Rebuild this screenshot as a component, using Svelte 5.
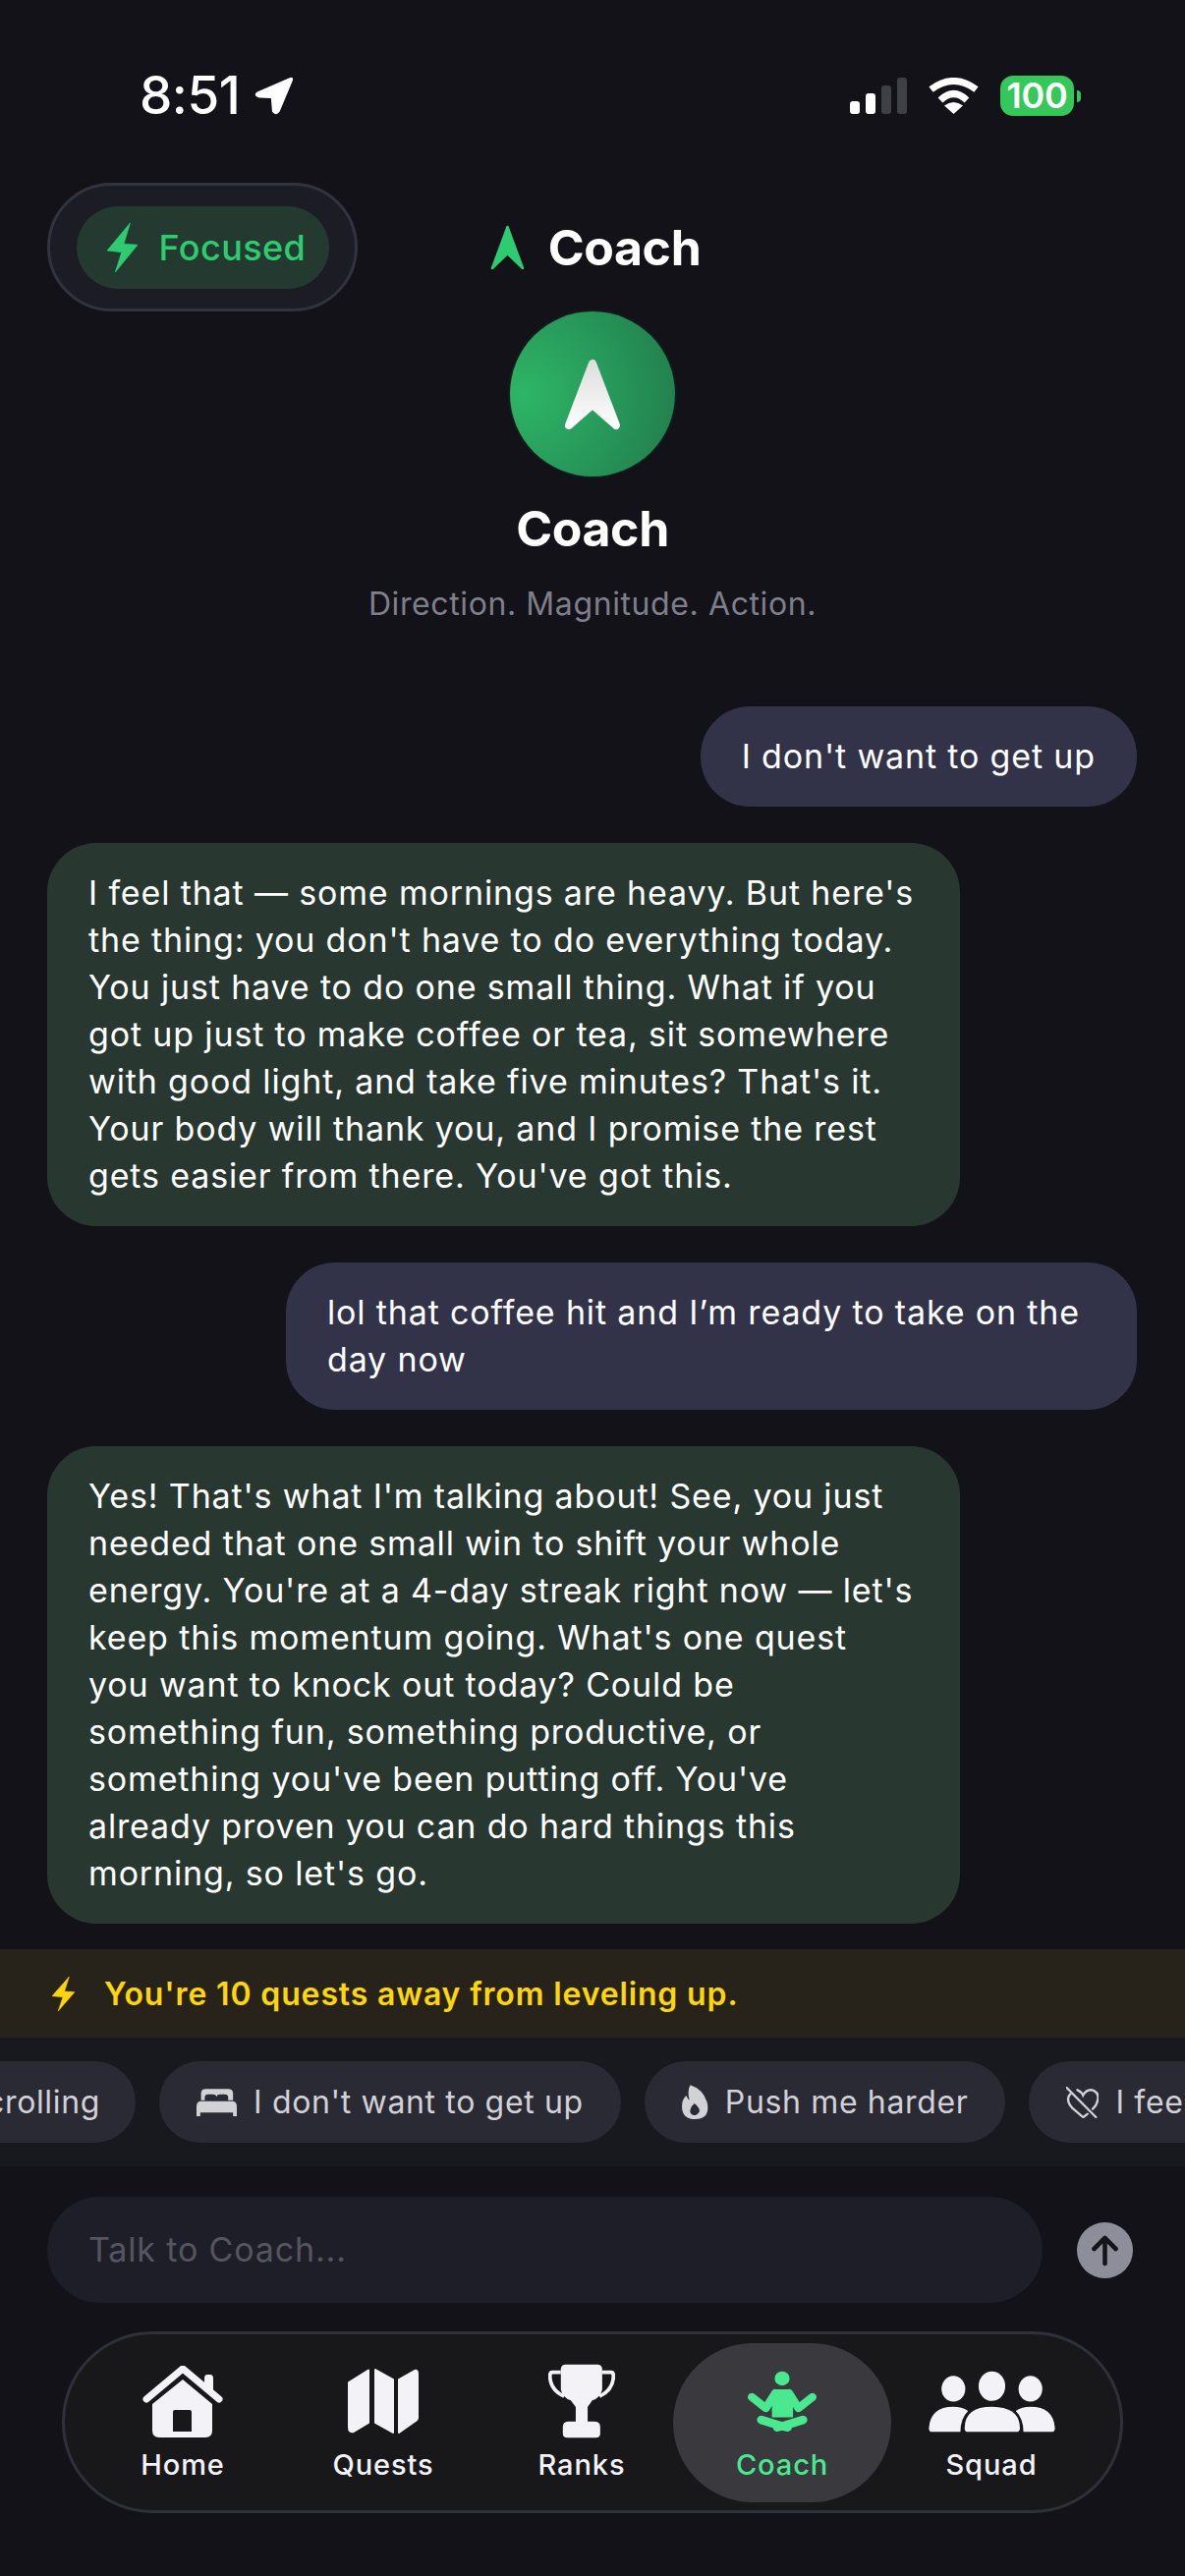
<script>
  const chips = [
    { text: "Doomscrolling", icon: null, cut: true },
    { text: "I don't want to get up", icon: "bed" },
    { text: "Push me harder", icon: "fire" },
    { text: "I feel unmotivated", icon: "heart" }
  ];
  const tabs = [
    { label: "Home", icon: "home", w: 208 },
    { label: "Quests", icon: "map", w: 200 },
    { label: "Ranks", icon: "trophy", w: 186, ml: 9 },
    { label: "Coach", icon: "coach", w: 222, active: true },
    { label: "Squad", icon: "squad", w: 204 }
  ];
</script>

<div class="page">
  <div class="status">
    <div class="time-wrap">
      <span class="time">8:51</span>
      <svg class="loc" viewBox="665 115 108 120" preserveAspectRatio="none"><path fill="#fff" d="M763 118 L675 163 Q662 173 680 181 L712 183 L715 225 Q725 240 735 225 L770 127 Q773 115 763 118Z"/></svg>
    </div>
    <div class="status-right">
      <div class="signal">
        <i class="b1"></i><i class="b2"></i><i class="b3"></i><i class="b4"></i>
      </div>
      <svg class="wifi" viewBox="0 0 51 37">
        <path d="M2.5 12 Q25.5 -5 48.5 12" fill="none" stroke="#fff" stroke-width="7"/>
        <path d="M12 23 Q25.5 10 39 23" fill="none" stroke="#fff" stroke-width="7"/>
        <path d="M25.5 37 L16 28.5 Q25.5 21.5 35 28.5Z" fill="#fff"/>
      </svg>
      <div class="battery"><span>100</span></div>
      <div class="nub"></div>
    </div>
  </div>

  <header class="header">
    <div class="mood">
      <div class="mood-inner">
        <svg class="bolt" viewBox="283 562 82 148" preserveAspectRatio="none"><path fill="#2ecc71" d="M345 562 L283 645 L322 650 L305 710 L365 628 L328 625Z" stroke="#2ecc71" stroke-width="2" stroke-linejoin="round"/></svg>
        <span>Focused</span>
      </div>
    </div>
    <div class="title">
      <svg class="title-arrow" viewBox="0 0 35 46"><polygon points="17.5,2 2,44 17.5,29 33,44" fill="#2ecc71" stroke="#2ecc71" stroke-width="2.5" stroke-linejoin="round"/></svg>
      <span>Coach</span>
    </div>
    <div></div>
  </header>

  <section class="hero">
    <div class="avatar">
      <svg class="avatar-arrow" viewBox="0 0 56 73">
        <defs><linearGradient id="ag" x1="0" y1="0" x2="0" y2="73" gradientUnits="userSpaceOnUse"><stop offset="0" stop-color="#dcdcdc"/><stop offset="1" stop-color="#ffffff"/></linearGradient></defs>
        <polygon points="28,5 4,68 28,47 52,68" fill="url(#ag)" stroke="url(#ag)" stroke-width="8" stroke-linejoin="round"/>
      </svg>
    </div>
    <h1>Coach</h1>
    <p>Direction. Magnitude. Action.</p>
  </section>

  <main class="messages">
    <div class="bubble user">I don't want to get up</div>
    <div class="bubble ai">I feel that — some mornings are heavy. But here's<br>the thing: you don't have to do everything today.<br>You just have to do one small thing. What if you<br>got up just to make coffee or tea, sit somewhere<br>with good light, and take five minutes? That's it.<br>Your body will thank you, and I promise the rest<br>gets easier from there. You've got this.</div>
    <div class="bubble user">lol that coffee hit and I’m ready to take on the day now</div>
    <div class="bubble ai">Yes! That's what I'm talking about! See, you just<br>needed that one small win to shift your whole<br>energy. You're at a 4-day streak right now — let's<br>keep this momentum going. What's one quest<br>you want to knock out today? Could be<br>something fun, something productive, or<br>something you've been putting off. You've<br>already proven you can do hard things this<br>morning, so let's go.</div>
  </main>

  <div class="banner">
    <svg class="banner-bolt" viewBox="283 562 82 148" preserveAspectRatio="none"><path fill="#ffd60a" d="M345 562 L283 645 L322 650 L305 710 L365 628 L328 625Z" stroke="#ffd60a" stroke-width="2" stroke-linejoin="round"/></svg>
    <span>You're 10 quests away from leveling up.</span>
  </div>

  <div class="chips">
    {#each chips as chip}
      <div class="chip" class:cut={chip.cut}>
        {#if chip.icon === "bed"}
          <svg class="i-bed" viewBox="525 498 107 84" preserveAspectRatio="none"><path fill="#d1d1d6" d="M537 512 Q537 499 550 499 H608 Q622 499 622 512 V533 H609 V524 Q609 515 600 515 H587 Q580 515 578 522 Q576 515 569 515 H556 Q547 515 547 524 V533 H537Z M535 536 H622 Q632 538 632 552 V582 H622 V571 H535 V582 H525 V552 Q525 538 535 536Z"/></svg>
        {:else if chip.icon === "fire"}
          <svg class="i-fire" viewBox="165 65 80 105" preserveAspectRatio="none"><path fill="#d1d1d6" fill-rule="evenodd" d="M190 66 Q228 78 241 118 Q252 170 205 170 Q165 170 165 130 Q165 110 178 98 Q182 108 188 112 Q180 85 190 66Z M203 122 Q222 138 217 148 Q211 158 201 158 Q188 155 190 142 Q192 130 203 122Z"/></svg>
        {:else if chip.icon === "heart"}
          <svg class="i-heart" viewBox="130 72 100 96" preserveAspectRatio="none"><path fill="none" stroke="#d1d1d6" stroke-width="7" stroke-linecap="round" d="M180 163 L150 138 Q125 110 145 92 M165 82 Q178 88 182 98 Q192 80 210 82 Q232 88 228 112 Q224 130 212 140 M196 155 L183 165 M132 75 L222 165"/></svg>
        {/if}
        <span>{chip.text}</span>
      </div>
    {/each}
  </div>

  <div class="composer">
    <div class="input">Talk to Coach...</div>
    <button class="send" aria-label="Send">
      <svg viewBox="0 0 57 57"><path d="M28.5 42 V16 M17.5 27 L28.5 16 L39.5 27" fill="none" stroke="#14141a" stroke-width="4.6" stroke-linecap="round" stroke-linejoin="round"/></svg>
    </button>
  </div>

  <nav class="nav">
    {#each tabs as tab}
      <div class="tab" class:active={tab.active} style="width:{tab.w}px;margin-left:{tab.ml || 0}px">
        <div class="tab-icon">
          {#if tab.icon === "home"}
            <svg width="82" height="73" viewBox="0 0 82 73">
              <path d="M4 34 L41 3 L78 34" fill="none" stroke="#f2f2f7" stroke-width="7" stroke-linecap="round" stroke-linejoin="round"/>
              <path d="M63 13 Q63 9 66 9 H69 Q72 9 72 13 V28 L63 20Z" fill="#f2f2f7"/>
              <path fill="#f2f2f7" fill-rule="evenodd" d="M41 14 L71 39 V66 Q71 73 64 73 H17 Q10 73 10 66 V39Z M33 45 Q31 45 31 47 V67 H50 V47 Q50 45 48 45Z"/>
            </svg>
          {:else if tab.icon === "map"}
            <svg width="72" height="66" viewBox="0 0 72 66">
              <g fill="#f2f2f7" stroke="#f2f2f7" stroke-width="2" stroke-linejoin="round">
                <path d="M1 14 L21 1.5 V55 L6 64 Q1 65 1 60Z"/>
                <path d="M28 1 L46 11 V65 L28 55Z"/>
                <path d="M52 11 L68 2 Q71 1 71 5 V50 Q71 52 69 53 L52 65Z"/>
              </g>
            </svg>
          {:else if tab.icon === "trophy"}
            <svg width="68" height="76" viewBox="57 36 202 228" preserveAspectRatio="none">
              <path fill="#f2f2f7" d="M110 38 H205 Q218 38 220 50 V115 Q215 140 190 148 L176 168 V212 H195 Q214 212 214 228 V250 Q214 262 200 262 H115 Q101 262 101 250 V228 Q101 212 120 212 H140 V168 L125 148 Q100 140 95 115 V50 Q97 38 110 38Z"/>
              <path fill="none" stroke="#f2f2f7" stroke-width="11" d="M95 62 H70 Q62 62 62 72 Q62 115 105 135 M220 62 H246 Q254 62 254 72 Q254 115 212 135"/>
            </svg>
          {:else if tab.icon === "coach"}
            <svg width="72" height="63" viewBox="442 157 208 190" preserveAspectRatio="none">
              <g fill="#4ae98f">
                <ellipse cx="546" cy="181" rx="22" ry="22"/>
                <path d="M522 214 H570 L578 225 V300 H516 V225Z"/>
              </g>
              <g fill="none" stroke="#4ae98f" stroke-linecap="round" stroke-linejoin="round">
                <path stroke-width="24" d="M457 238 L498 272 L526 226 M635 238 L594 272 L566 226"/>
                <path stroke-width="26" d="M485 308 L546 328 L607 308"/>
              </g>
              <path fill="#4ae98f" d="M520 320 H574 V336 Q570 346 560 344 L546 340 L532 344 Q522 346 520 336Z"/>
            </svg>
          {:else if tab.icon === "squad"}
            <svg width="129" height="63" viewBox="965 160 362 188" preserveAspectRatio="none">
              <g fill="#f2f2f7">
                <ellipse cx="1036" cy="215" rx="34" ry="39"/>
                <ellipse cx="1146" cy="207" rx="38" ry="45"/>
                <ellipse cx="1256" cy="215" rx="34" ry="39"/>
                <path d="M1068 335 Q1068 270 1146 270 Q1226 270 1226 335 Q1226 346 1215 346 H1078 Q1068 346 1068 335Z"/>
                <path d="M966 335 Q970 270 1036 270 Q1060 270 1078 282 Q1056 305 1056 346 H976 Q966 346 966 335Z"/>
                <path d="M1326 335 Q1322 270 1256 270 Q1232 270 1214 282 Q1236 305 1236 346 H1316 Q1326 346 1326 335Z"/>
              </g>
            </svg>
          {/if}
        </div>
        <span>{tab.label}</span>
      </div>
    {/each}
  </nav>
</div>

<style>
  :global(body) { margin: 0; background: #121218; }
  .page {
    width: 1206px; height: 2622px; overflow: hidden;
    display: flex; flex-direction: column;
    background: #121218; color: #fff;
    font-family: Inter, "Liberation Sans", sans-serif;
  }
  .status {
    height: 41px; margin-top: 77px; padding: 0 106px 0 142px;
    display: flex; justify-content: space-between; align-items: center;
  }
  .time-wrap { display: flex; align-items: center; gap: 14px; }
  .time { font-size: 53px; font-weight: 500; line-height: 41px; letter-spacing: -0.5px; }
  .loc { width: 41px; height: 39px; }
  .status-right { display: flex; align-items: center; }
  .signal { display: flex; align-items: flex-end; gap: 6px; height: 37px; }
  .signal i { display: block; width: 10px; border-radius: 3px; background: #fff; }
  .b1 { height: 13px; }
  .b2 { height: 21px; }
  .b3 { height: 29px; background: #3f3f46 !important; }
  .b4 { height: 37px; background: #3f3f46 !important; }
  .wifi { width: 51px; height: 37px; margin-left: 22px; }
  .battery {
    width: 75px; height: 41px; margin-left: 22px; border-radius: 13px;
    background: #34c759; display: flex; align-items: center; justify-content: center;
    font-size: 36px; font-weight: 600; line-height: 41px; letter-spacing: -0.3px;
  }
  .nub { width: 4px; height: 12px; margin-left: 3px; border-radius: 0 6px 6px 0; background: #34c759; }

  .header {
    margin-top: 68px; padding: 0 48px; height: 131px;
    display: grid; grid-template-columns: 1fr auto 1fr; align-items: center;
  }
  .mood {
    width: 316px; height: 131px; box-sizing: border-box;
    border: 3px solid #33333f; border-radius: 66px; background: #1c1c24;
    display: flex; align-items: center; justify-content: center;
  }
  .mood-inner {
    width: 257px; height: 84px; border-radius: 42px; background: #243a30;
    display: flex; align-items: center; gap: 22px; padding-left: 31px; box-sizing: border-box;
  }
  .bolt { width: 31px; height: 50px; flex: none; }
  .mood-inner span { font-size: 36px; font-weight: 500; color: #2ecc71; letter-spacing: 0.4px; }
  .title { display: flex; align-items: center; gap: 24px; margin-left: 6px; }
  .title-arrow { width: 35px; height: 46px; }
  .title span { font-size: 50px; font-weight: 700; letter-spacing: -0.4px; }

  .hero { display: flex; flex-direction: column; align-items: center; }
  .avatar {
    width: 168px; height: 168px; border-radius: 50%;
    background: radial-gradient(circle at 8% 50%, #2eb566 0%, #27995a 50%, #227a4b 100%);
    box-shadow: 0 0 4px rgba(46, 204, 113, 0.15);
    display: flex; align-items: center; justify-content: center;
  }
  .avatar-arrow { width: 56px; height: 73px; }
  h1 { margin: 23px 0 0; font-size: 50px; line-height: 60px; font-weight: 700; letter-spacing: -0.4px; }
  p { margin: 27px 0 0; font-size: 32px; line-height: 40px; color: #7f7f8c; letter-spacing: 0.6px; }

  .messages { margin-top: 84px; padding: 0 49px 0 48px; display: flex; flex-direction: column; gap: 37px; }
  .bubble {
    padding: 27px 42px; border-radius: 50px; box-sizing: border-box;
    font-size: 34px; line-height: 48px; letter-spacing: 0.85px; width: fit-content; font-weight: 400;
  }
  .user { align-self: flex-end; background: #323349; max-width: 866px; }
  .ai { align-self: flex-start; background: #283830; width: 929px; padding-right: 20px; }

  .banner {
    margin-top: 26px; height: 90px; flex: none; background: #28231a; color: #ffd60a;
    display: flex; align-items: center; gap: 30px; padding-left: 53px;
    font-size: 32px; font-weight: 600; letter-spacing: 0.85px;
  }
  .banner-bolt { width: 23px; height: 35px; flex: none; }
  .chips {
    height: 131px; flex: none; box-sizing: border-box; padding-top: 24px; background: #18181f;
    display: flex; gap: 24px; overflow: hidden;
  }
  .chip {
    height: 83px; flex: none; box-sizing: border-box; padding: 0 38px; border-radius: 42px;
    background: #2a2a35; color: #d1d1d6; font-size: 32px; letter-spacing: 0.65px;
    display: flex; align-items: center; gap: 17px;
  }
  .cut { width: 338px; margin-left: -200px; justify-content: flex-end; overflow: hidden; padding-right: 36px; }
  .i-bed { width: 41px; height: 28px; }
  .i-fire { width: 27px; height: 35px; }
  .i-heart { width: 33px; height: 32px; }

  .composer { margin-top: 31px; padding: 0 53px 0 48px; display: flex; align-items: center; gap: 35px; }
  .input {
    width: 1013px; height: 108px; border-radius: 54px; background: #1e1e28; color: #55555f;
    font-size: 34px; line-height: 108px; padding-left: 42px; box-sizing: border-box; letter-spacing: 0.85px;
  }
  .send { width: 57px; height: 57px; padding: 0; border: 0; border-radius: 50%; background: #8e8e9a; }
  .send svg { display: block; }

  .nav {
    margin: 29px 0 0 63px; width: 1080px; height: 185px; box-sizing: border-box;
    border: 3px solid #30303a; border-radius: 92px; background: #18181b;
    display: flex; align-items: center; padding-left: 16px;
  }
  .tab {
    height: 162px; box-sizing: border-box; flex: none; border-radius: 81px;
    padding-top: 22px; display: flex; flex-direction: column; align-items: center;
    font-size: 29px; line-height: 35px; font-weight: 500; color: #f2f2f7; letter-spacing: 0.9px;
  }
  .tab-icon { height: 75px; display: flex; align-items: center; justify-content: center; margin-bottom: 9px; }
  .active { background: #39393e; color: #4ae98f; }
</style>
